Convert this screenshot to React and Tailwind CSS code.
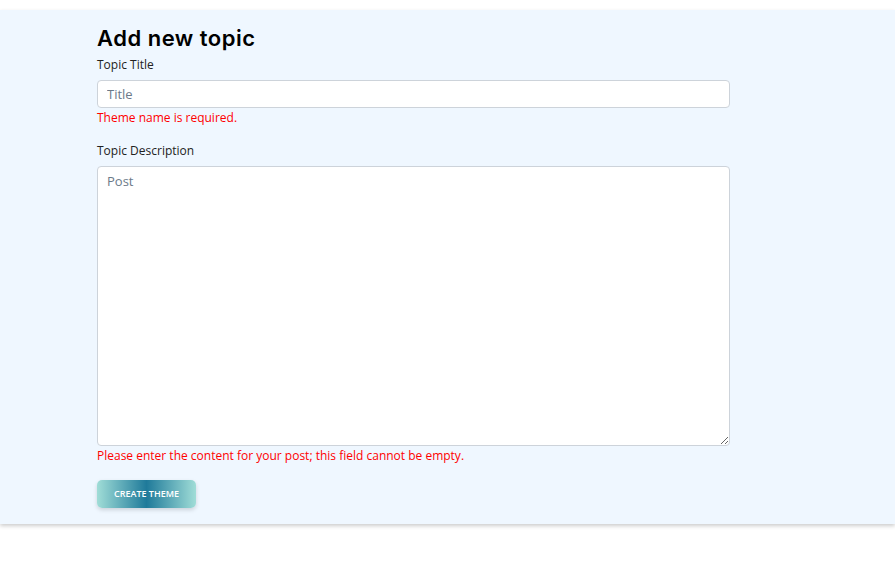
export default function App() {
  return (
    <div className="min-h-screen bg-white pt-[10px]" style={{ fontFamily: '"Open Sans", sans-serif' }}>
      <section className="bg-[#eff7ff] shadow-[0_2px_4px_rgba(0,0,0,0.2)]">
        <div className="pl-[97px] pt-[15px] pb-[16px] w-[730px]">
          <h1 className="text-[22px] leading-[26px] font-semibold tracking-[0.5px] text-black" style={{ fontFamily: '"Inter", sans-serif' }}>
            Add new topic
          </h1>
          {/* title */}
          <label className="block mt-[5px] text-[12px] leading-[17px] text-[#222]">Topic Title</label>
          <input
            type="text"
            placeholder="Title"
            className="mt-[7px] block w-full h-[28px] rounded-[4px] border border-[#cdd3da] bg-white px-[9px] text-[13px] outline-none placeholder:text-[#6c7a89]"
          />
          <p className="mt-[1px] text-[12px] leading-[17px] text-[#ff0000]">Theme name is required.</p>
          {/* description */}
          <label className="block mt-[16px] text-[12px] leading-[17px] text-[#222]">Topic Description</label>
          <textarea
            placeholder="Post"
            className="mt-[7px] block w-full h-[280px] rounded-[4px] border border-[#cdd3da] bg-white px-[9px] py-[5px] text-[13px] outline-none placeholder:text-[#6c7a89]"
          />
          <p className="mt-[1px] text-[12px] leading-[17px] text-[#ff0000]">
            Please enter the content for your post; this field cannot be empty.
          </p>
          <button className="mt-[16px] w-[99px] h-[28px] rounded-[5px] bg-[linear-gradient(90deg,#a0ddd7_0%,#1f7a9a_50%,#a0ddd7_100%)] text-white text-[9px] font-semibold uppercase shadow-[0_2px_4px_rgba(0,0,0,0.15)]">
            Create Theme
          </button>
        </div>
      </section>
    </div>
  );
}
